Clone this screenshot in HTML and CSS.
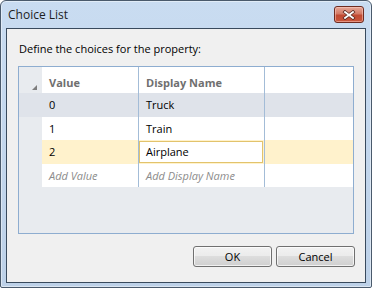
FILE: index.html
```html
<!DOCTYPE html>
<html>
<head>
<meta charset="utf-8">
<link rel="stylesheet" href="styles.css">
</head>
<body>
<div class="window">
  <div class="titlebar">
    <span class="title">Choice List</span>
    <div class="close">
      <svg width="14" height="10" viewBox="0 0 14 10">
        <path d="M3 2 L11 8 M11 2 L3 8" stroke="#5a2a22" stroke-width="3.4" stroke-linecap="square" fill="none"/>
        <path d="M3 2 L11 8 M11 2 L3 8" stroke="#ffffff" stroke-width="1.8" stroke-linecap="square" fill="none"/>
      </svg>
    </div>
  </div>
  <div class="client">
    <div class="prompt">Define the choices for the property:</div>
    <div class="grid">
      <div class="row head">
        <div class="rh"><svg width="5" height="5" viewBox="0 0 5 5"><polygon points="5,0 5,5 0,5" fill="#7d7d7d"/></svg></div>
        <div class="cell c1">Value</div>
        <div class="cell c2">Display Name</div>
        <div class="cell fill"></div>
      </div>
      <div class="row sel">
        <div class="rh"></div>
        <div class="cell c1">0</div>
        <div class="cell c2">Truck</div>
        <div class="cell fill"></div>
      </div>
      <div class="row">
        <div class="rh"></div>
        <div class="cell c1">1</div>
        <div class="cell c2">Train</div>
        <div class="cell fill"></div>
      </div>
      <div class="row cur">
        <div class="rh"></div>
        <div class="cell c1">2</div>
        <div class="cell c2 editing"><div class="editor">Airplane</div></div>
        <div class="cell fill"></div>
      </div>
      <div class="row add">
        <div class="rh"></div>
        <div class="cell c1">Add Value</div>
        <div class="cell c2">Add Display Name</div>
        <div class="cell fill"></div>
      </div>
    </div>
    <div class="buttons">
      <button class="btn">OK</button>
      <button class="btn">Cancel</button>
    </div>
  </div>
</div>
</body>
</html>
```
FILE: styles.css
```css
html, body {
  margin: 0;
  padding: 0;
}
body {
  font-family: "Open Sans", "Noto Sans", sans-serif;
  font-size: 11px;
  color: #000;
  background: #fff;
}
.window {
  width: 372px;
  height: 288px;
  box-sizing: border-box;
  border: 1px solid #4a5a6c;
  border-radius: 6px 6px 2px 2px;
  background: linear-gradient(#c9dcf1, #bdd1e8);
  box-shadow: inset 0 0 0 1px rgba(255,255,255,0.45);
  padding: 0 5px 4px 5px;
  display: flex;
  flex-direction: column;
}
.titlebar {
  height: 27px;
  display: flex;
  align-items: flex-start;
  justify-content: space-between;
}
.title {
  margin-top: 5px;
  margin-left: 2px;
  font-size: 12px;
  color: #1e1e1e;
}
.close {
  margin-top: 5px;
  margin-right: 2px;
  width: 30px;
  height: 17px;
  box-sizing: border-box;
  border: 1px solid #6e2b20;
  border-radius: 3px;
  background: linear-gradient(#e5a797 0%, #d47a66 45%, #c14a33 55%, #c9563b 100%);
  box-shadow: inset 0 0 0 1px rgba(255,210,200,0.5);
  display: flex;
  align-items: center;
  justify-content: center;
}
.client {
  flex: 1;
  border: 1px solid #394a5d;
  background: #f0f0f0;
  display: flex;
  flex-direction: column;
}
.prompt {
  padding: 12px 0 0 12px;
  height: 16px;
  line-height: 16px;
}
.grid {
  margin: 9px 0 0 11px;
  width: 336px;
  height: 168px;
  box-sizing: border-box;
  border: 1px solid #8eadd0;
  background: #e8ebef;
  display: flex;
  flex-direction: column;
}
.row {
  display: flex;
  height: 23.5px;
  background: #fff;
}
.row.head {
  height: 26px;
}
.rh {
  width: 23px;
  flex: none;
  background: #e8ebef;
  display: flex;
  align-items: flex-end;
  justify-content: flex-end;
}
.head .rh svg {
  margin: 0 5px 3px 0;
}
.cell {
  box-sizing: border-box;
  display: flex;
  align-items: center;
  padding-left: 7px;
  white-space: nowrap;
}
.c1 {
  width: 97px;
  border-right: 1px solid #a3bcd7;
}
.c2 {
  width: 126px;
  border-right: 1px solid #a3bcd7;
}
.fill {
  flex: 1;
}
.head .cell {
  font-weight: bold;
  color: #6f6f6f;
  padding-top: 4px;
}
.row.sel, .row.sel .rh {
  background: #dfe3ea;
}
.row.cur {
  background: #fff2cc;
}
.add .cell {
  font-style: italic;
  color: #8c8c8c;
}
.c2.editing {
  padding: 1px 1px 1px 0;
  align-items: stretch;
}
.editor {
  flex: 1;
  box-sizing: border-box;
  border: 1px solid #e2c36c;
  background: #fff;
  padding-left: 6px;
  display: flex;
  align-items: center;
}
.buttons {
  display: flex;
  justify-content: flex-end;
  gap: 4px;
  margin: 12px 10px 0 0;
}
.btn {
  width: 79px;
  height: 21px;
  box-sizing: border-box;
  border: 1px solid #707070;
  border-radius: 3px;
  background: linear-gradient(#f2f2f2 0%, #ebebeb 50%, #dddddd 50%, #cfcfcf 100%);
  box-shadow: inset 0 0 0 1px rgba(255,255,255,0.7);
  font-family: "Open Sans", "Noto Sans", sans-serif;
  font-size: 11px;
  color: #000;
  padding: 0;
}
```
